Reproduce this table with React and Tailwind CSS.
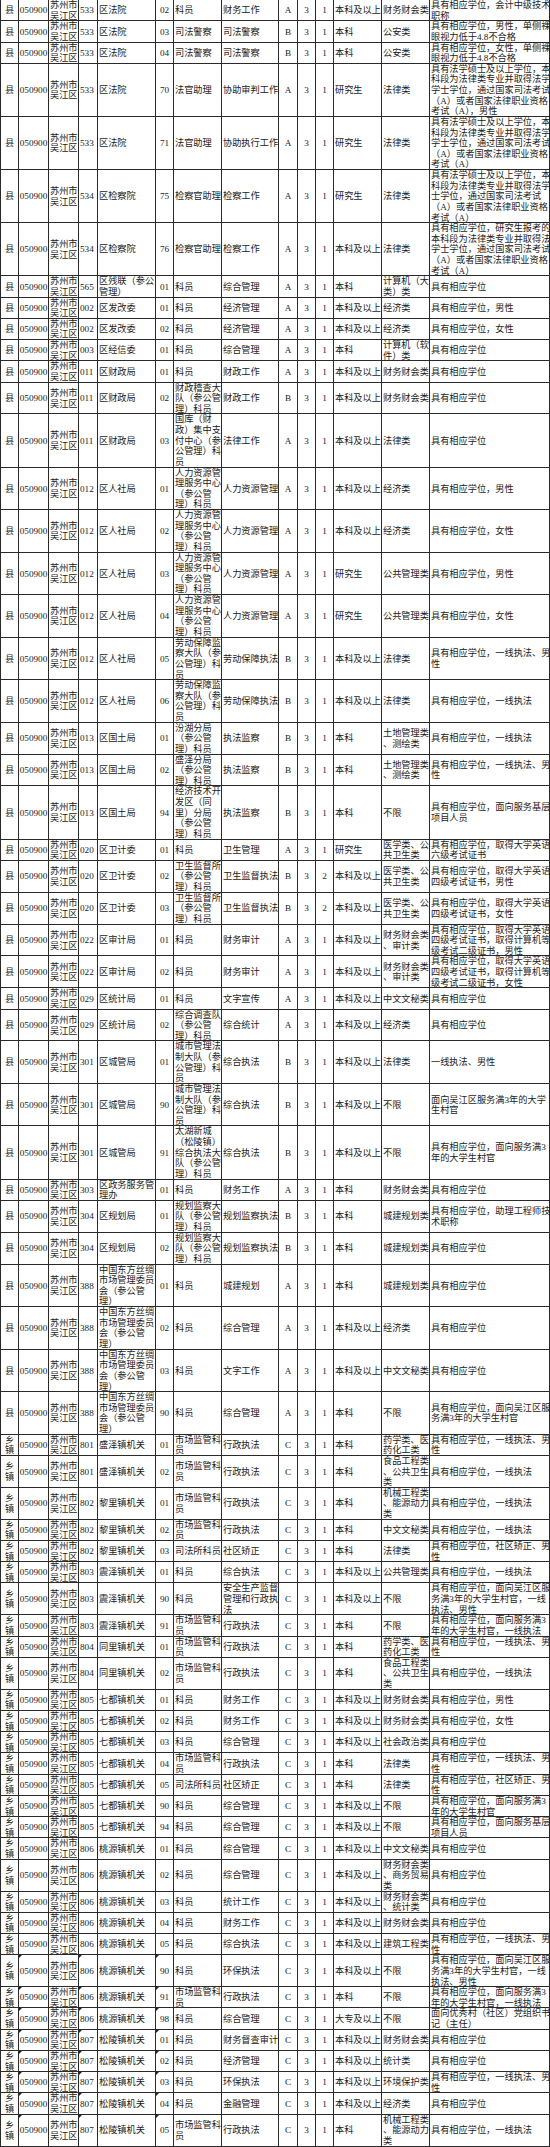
import React from "react";

const GRID =
  "grid grid-cols-[18px_30px_30px_19px_58px_18px_48px_57px_19px_18px_18px_48px_48px_120px]";
const H = {
  2: "h-[21.26px]",
  3: "h-[31.89px]",
  4: "h-[42.52px]",
  5: "h-[53.15px]",
};

const L4 =
  "具有法学硕士及以上学位，本\n科段为法律类专业并取得法学\n学士学位，通过国家司法考试\n（A）或者国家法律职业资格\n考试（A），男性";
const L5 =
  "具有法学硕士及以上学位，本\n科段为法律类专业并取得法学\n学士学位，通过国家司法考试\n（A）或者国家法律职业资格\n考试（A）";
const L6 =
  "具有法学硕士及以上学位，本\n科段为法律类专业并取得法学\n士学位，通过国家司法考试\n（A）或者国家法律职业资格\n考试（A）";
const L7 =
  "具有相应学位，研究生报考的\n本科段为法律类专业并取得法\n学士学位，通过国家司法考试\n（A）或者国家法律职业资格\n考试（A）";

const RL = "人力资源管\n理服务中心\n（参公管\n理）科员";
const LD = "劳动保障监\n察大队（参\n公管理）科\n员";
const WS = "卫生监督所\n（参公管\n理）科员";
const CG = "城市管理法\n制大队（参\n公管理）科\n员";
const GH = "规划监察大\n队（参公管\n理）科员";
const SC = "中国东方丝绸\n市场管理委员\n会（参公管\n理）";
const SJ = "市场监管科\n员";
const XY = "具有相应学位";
const YX = "具有相应学位，一线执法";
const YXM = "具有相应学位，一线执法、男\n性";
const CUN3 = "具有相应学位，面向吴江区服\n务满3年的大学生村官，一线\n执法、男性";
const CUN91 = "具有相应学位，面向服务满3\n年的大学生村官，一线执法";
const X = "县";
const Z = "乡\n镇";

// [type, deptCode, deptName, posCode, posName, job, cat, count, edu, major, req]
const rows = [
  [X, "533", "区法院", "02", "科员", "财务工作", "A", "1", "本科及以上", "财务财会类", "具有相应学位，会计中级技术\n职称"],
  [X, "533", "区法院", "03", "司法警察", "司法警察", "B", "1", "本科", "公安类", "具有相应学位，男性，单侧裸\n眼视力低于4.8不合格"],
  [X, "533", "区法院", "04", "司法警察", "司法警察", "B", "1", "本科", "公安类", "具有相应学位，女性，单侧裸\n眼视力低于4.8不合格"],
  [X, "533", "区法院", "70", "法官助理", "协助审判工作", "A", "1", "研究生", "法律类", L4],
  [X, "533", "区法院", "71", "法官助理", "协助执行工作", "A", "1", "研究生", "法律类", L5],
  [X, "534", "区检察院", "75", "检察官助理", "检察工作", "A", "1", "研究生", "法律类", L6],
  [X, "534", "区检察院", "76", "检察官助理", "检察工作", "A", "1", "本科及以上", "法律类", L7],
  [X, "565", "区残联（参公\n管理）", "01", "科员", "综合管理", "A", "1", "本科", "计算机（大\n类）类", XY],
  [X, "002", "区发改委", "01", "科员", "经济管理", "A", "1", "本科及以上", "经济类", "具有相应学位，男性"],
  [X, "002", "区发改委", "02", "科员", "经济管理", "A", "1", "本科及以上", "经济类", "具有相应学位，女性"],
  [X, "003", "区经信委", "01", "科员", "综合管理", "A", "1", "本科", "计算机（软\n件）类", XY],
  [X, "011", "区财政局", "01", "科员", "财政工作", "A", "1", "本科及以上", "财务财会类", XY],
  [X, "011", "区财政局", "02", "财政稽查大\n队（参公管\n理）科员", "财政工作", "B", "1", "本科及以上", "财务财会类", XY],
  [X, "011", "区财政局", "03", "国库（财\n政）集中支\n付中心（参\n公管理）科\n员", "法律工作", "A", "1", "本科及以上", "法律类", XY],
  [X, "012", "区人社局", "01", RL, "人力资源管理", "A", "1", "本科及以上", "经济类", "具有相应学位，男性"],
  [X, "012", "区人社局", "02", RL, "人力资源管理", "A", "1", "本科及以上", "经济类", "具有相应学位，女性"],
  [X, "012", "区人社局", "03", RL, "人力资源管理", "A", "1", "研究生", "公共管理类", "具有相应学位，男性"],
  [X, "012", "区人社局", "04", RL, "人力资源管理", "A", "1", "研究生", "公共管理类", "具有相应学位，女性"],
  [X, "012", "区人社局", "05", LD, "劳动保障执法", "B", "1", "本科及以上", "法律类", YXM],
  [X, "012", "区人社局", "06", LD, "劳动保障执法", "B", "1", "本科及以上", "法律类", YX],
  [X, "013", "区国土局", "01", "汾湖分局\n（参公管\n理）科员", "执法监察", "B", "1", "本科", "土地管理类\n、测绘类", YX],
  [X, "013", "区国土局", "02", "盛泽分局\n（参公管\n理）科员", "执法监察", "B", "1", "本科", "土地管理类\n、测绘类", YXM],
  [X, "013", "区国土局", "94", "经济技术开\n发区（同\n里）分局\n（参公管\n理）科员", "执法监察", "B", "1", "本科", "不限", "具有相应学位，面向服务基层\n项目人员"],
  [X, "020", "区卫计委", "01", "科员", "卫生管理", "A", "1", "研究生", "医学类、公\n共卫生类", "具有相应学位，取得大学英语\n六级考试证书"],
  [X, "020", "区卫计委", "02", WS, "卫生监督执法", "B", "2", "本科及以上", "医学类、公\n共卫生类", "具有相应学位，取得大学英语\n四级考试证书，男性"],
  [X, "020", "区卫计委", "03", WS, "卫生监督执法", "B", "2", "本科及以上", "医学类、公\n共卫生类", "具有相应学位，取得大学英语\n四级考试证书，女性"],
  [X, "022", "区审计局", "01", "科员", "财务审计", "A", "1", "本科及以上", "财务财会类\n、审计类", "具有相应学位，取得大学英语\n四级考试证书，取得计算机等\n级考试二级证书，男性"],
  [X, "022", "区审计局", "02", "科员", "财务审计", "A", "1", "本科及以上", "财务财会类\n、审计类", "具有相应学位，取得大学英语\n四级考试证书，取得计算机等\n级考试二级证书，女性"],
  [X, "029", "区统计局", "01", "科员", "文字宣传", "A", "1", "本科及以上", "中文文秘类", XY],
  [X, "029", "区统计局", "02", "综合调查队\n（参公管\n理）科员", "综合统计", "A", "1", "本科及以上", "经济类", XY],
  [X, "301", "区城管局", "01", CG, "综合执法", "B", "1", "本科及以上", "法律类", "一线执法、男性"],
  [X, "301", "区城管局", "90", CG, "综合执法", "B", "1", "本科及以上", "不限", "面向吴江区服务满3年的大学\n生村官"],
  [X, "301", "区城管局", "91", "太湖新城\n（松陵镇）\n综合执法大\n队（参公管\n理）科员", "综合执法", "B", "1", "本科及以上", "不限", "具有相应学位，面向服务满3\n年的大学生村官"],
  [X, "303", "区政务服务管\n理办", "01", "科员", "财务工作", "A", "1", "本科", "财务财会类", XY],
  [X, "304", "区规划局", "01", GH, "规划监察执法", "B", "1", "本科", "城建规划类", "具有相应学位，助理工程师技\n术职称"],
  [X, "304", "区规划局", "02", GH, "规划监察执法", "B", "1", "本科", "城建规划类", XY],
  [X, "388", SC, "01", "科员", "城建规划", "A", "1", "本科", "城建规划类", XY],
  [X, "388", SC, "02", "科员", "综合管理", "A", "1", "本科及以上", "经济类", XY],
  [X, "388", SC, "03", "科员", "文字工作", "A", "1", "本科及以上", "中文文秘类", XY],
  [X, "388", SC, "90", "科员", "综合管理", "A", "1", "本科", "不限", "具有相应学位，面向吴江区服\n务满3年的大学生村官"],
  [Z, "801", "盛泽镇机关", "01", SJ, "行政执法", "C", "1", "本科", "药学类、医\n药化工类", YXM],
  [Z, "801", "盛泽镇机关", "02", SJ, "行政执法", "C", "1", "本科", "食品工程类\n、公共卫生\n类", YX],
  [Z, "802", "黎里镇机关", "01", SJ, "行政执法", "C", "1", "本科", "机械工程类\n、能源动力\n类", YX],
  [Z, "802", "黎里镇机关", "02", SJ, "行政执法", "C", "1", "本科", "中文文秘类", YX],
  [Z, "802", "黎里镇机关", "03", "司法所科员", "社区矫正", "C", "1", "本科", "法律类", "具有相应学位，社区矫正、男\n性"],
  [Z, "803", "震泽镇机关", "01", "科员", "综合执法", "C", "1", "本科及以上", "公共管理类", YX],
  [Z, "803", "震泽镇机关", "90", "科员", "安全生产监督\n管理和行政执\n法", "C", "1", "本科及以上", "不限", CUN3],
  [Z, "803", "震泽镇机关", "91", SJ, "行政执法", "C", "1", "本科", "不限", CUN91],
  [Z, "804", "同里镇机关", "01", SJ, "行政执法", "C", "1", "本科", "药学类、医\n药化工类", YXM],
  [Z, "804", "同里镇机关", "02", SJ, "行政执法", "C", "1", "本科", "食品工程类\n、公共卫生\n类", YX],
  [Z, "805", "七都镇机关", "01", "科员", "财务工作", "C", "1", "本科及以上", "财务财会类", "具有相应学位，男性"],
  [Z, "805", "七都镇机关", "02", "科员", "财务工作", "C", "1", "本科及以上", "财务财会类", "具有相应学位，女性"],
  [Z, "805", "七都镇机关", "03", "科员", "综合管理", "C", "1", "本科及以上", "社会政治类", XY],
  [Z, "805", "七都镇机关", "04", SJ, "行政执法", "C", "1", "本科", "法律类", YXM],
  [Z, "805", "七都镇机关", "05", "司法所科员", "社区矫正", "C", "1", "本科", "法律类", "具有相应学位，社区矫正、男\n性"],
  [Z, "805", "七都镇机关", "90", "科员", "综合管理", "C", "1", "本科及以上", "不限", "具有相应学位，面向服务满3\n年的大学生村官"],
  [Z, "805", "七都镇机关", "94", "科员", "综合管理", "C", "1", "本科及以上", "不限", "具有相应学位，面向服务基层\n项目人员"],
  [Z, "806", "桃源镇机关", "01", "科员", "综合管理", "C", "1", "本科及以上", "中文文秘类", XY],
  [Z, "806", "桃源镇机关", "02", "科员", "综合管理", "C", "1", "本科及以上", "财务财会类\n、商务贸易\n类", XY],
  [Z, "806", "桃源镇机关", "03", "科员", "统计工作", "C", "1", "本科及以上", "财务财会类\n、统计类", XY],
  [Z, "806", "桃源镇机关", "04", "科员", "财务工作", "C", "1", "本科及以上", "财务财会类", XY],
  [Z, "806", "桃源镇机关", "05", "科员", "综合执法", "C", "1", "本科及以上", "建筑工程类", YXM],
  [Z, "806", "桃源镇机关", "90", "科员", "环保执法", "C", "1", "本科及以上", "不限", CUN3],
  [Z, "806", "桃源镇机关", "91", SJ, "行政执法", "C", "1", "本科", "不限", CUN91],
  [Z, "806", "桃源镇机关", "98", "科员", "综合管理", "C", "1", "大专及以上", "不限", "面向优秀村（社区）党组织书\n记（主任）"],
  [Z, "807", "松陵镇机关", "01", "科员", "财务督查审计", "C", "1", "本科及以上", "财务财会类", XY],
  [Z, "807", "松陵镇机关", "02", "科员", "经济管理", "C", "1", "本科及以上", "统计类", XY],
  [Z, "807", "松陵镇机关", "03", "科员", "环保执法", "C", "1", "本科及以上", "环境保护类", YXM],
  [Z, "807", "松陵镇机关", "04", "科员", "金融管理", "C", "1", "本科及以上", "经济类", XY],
  [Z, "807", "松陵镇机关", "05", SJ, "行政执法", "C", "1", "本科", "机械工程类\n、能源动力\n类", YX],
];

function Cell({ children, center, mark }) {
  return (
    <div
      className={
        center
          ? "relative flex items-center justify-center text-center border-r border-[#2a2a2a] px-[1px] whitespace-pre"
          : "relative flex items-center border-r border-[#2a2a2a] px-[1px] whitespace-pre"
      }
    >
      {mark && (
        <span className="absolute left-0 top-0 h-0 w-0 border-t-[3px] border-r-[3px] border-t-[#222] border-r-transparent" />
      )}
      <span>{children}</span>
    </div>
  );
}

function Row({ r, mark }) {
  const [t, dc, dn, pc, pn, job, cat, cnt, edu, maj, req] = r;
  const all = [t, dn, pn, job, maj, req, edu];
  let lines = 2;
  for (const s of all) lines = Math.max(lines, s.split("\n").length);
  return (
    <div className={`${GRID} ${H[lines]} border-b border-[#2a2a2a]`}>
      <Cell center>{t}</Cell>
      <Cell center mark={mark}>050900</Cell>
      <Cell>{"苏州市\n吴江区"}</Cell>
      <Cell mark={mark}>{dc}</Cell>
      <Cell>{dn}</Cell>
      <Cell center mark={mark}>{pc}</Cell>
      <Cell>{pn}</Cell>
      <Cell>{job}</Cell>
      <Cell center>{cat}</Cell>
      <Cell center>3</Cell>
      <Cell center>{cnt}</Cell>
      <Cell>{edu}</Cell>
      <Cell>{maj}</Cell>
      <Cell>{req}</Cell>
    </div>
  );
}

export default function App() {
  return (
    <div className="w-[550px] bg-white">
      <div className="border-l border-[#2a2a2a] text-[#1c1c1c] text-[9.2px] leading-[10.63px] font-[family-name:'Liberation_Serif','Noto_Sans_CJK_SC',serif]">
        {rows.map((r, i) => (
          <Row key={i} r={r} mark={i >= 62} />
        ))}
      </div>
    </div>
  );
}
